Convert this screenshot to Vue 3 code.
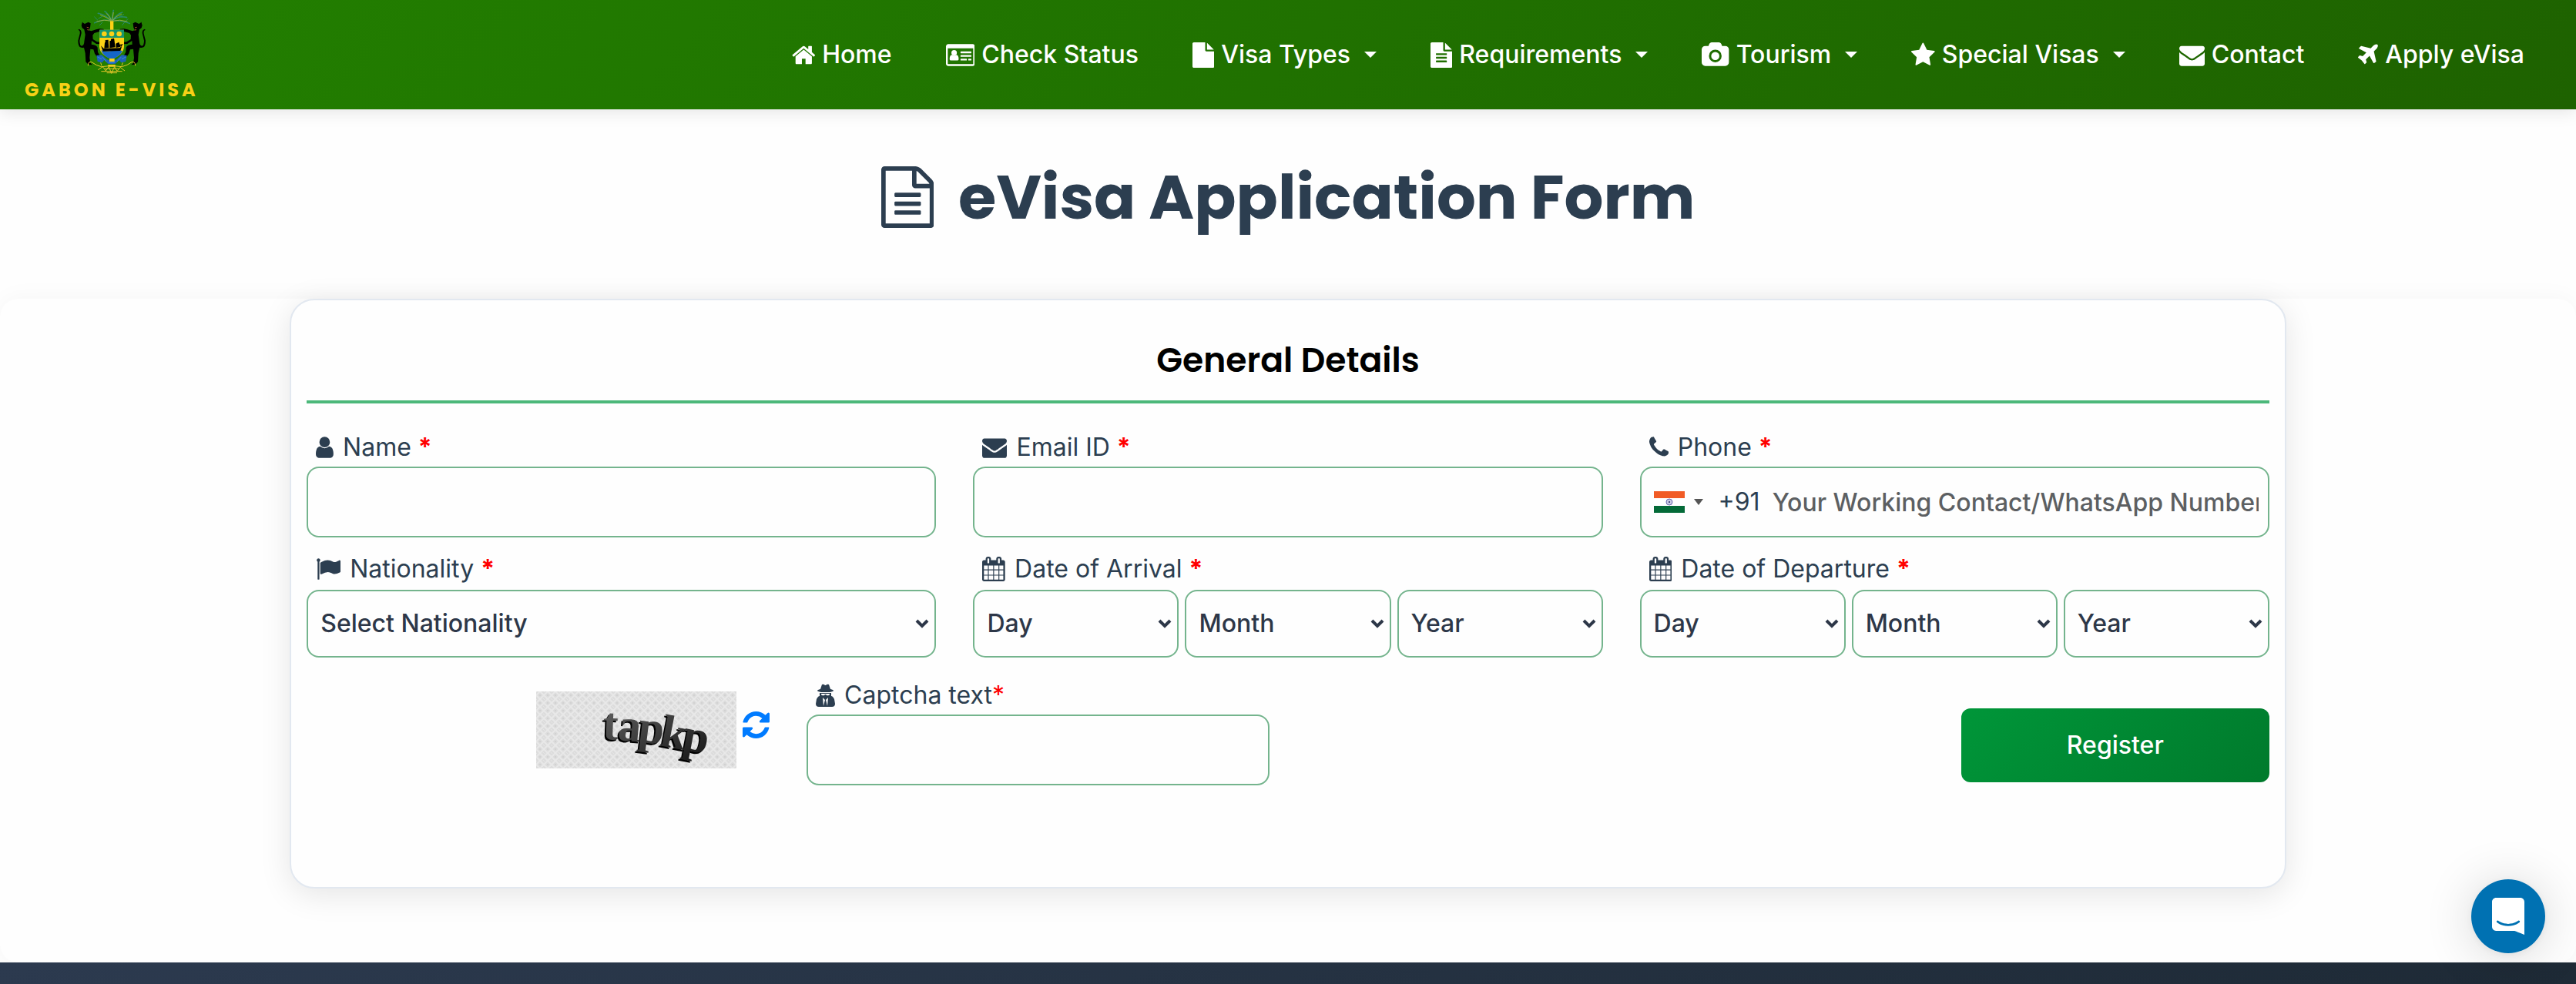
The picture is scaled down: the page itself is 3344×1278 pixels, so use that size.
<script setup>
const icons = {
  home: {
    box: '64 0 1664 1792',
    d: 'M1472 992v480q0 26-19 45t-45 19h-384v-384h-256v384h-384q-26 0-45-19t-19-45v-480q0-1 .5-3t.5-3l575-474 575 474q1 2 1 6zm223-69l-62 74q-8 9-21 11h-3q-13 0-21-7l-692-577-692 577q-12 8-24 7-13-2-21-11l-62-74q-8-10-7-23.5t11-21.5l719-599q32-26 76-26t76 26l244 204v-195q0-14 9-23t23-9h192q14 0 23 9t9 23v408l219 182q10 8 11 21.5t-7 23.5z'
  },
  card: {
    box: '0 0 2048 1792',
    d: 'M160 128h1728q66 0 113 47t47 113v1216q0 66-47 113t-113 47h-1728q-66 0-113-47t-47-113v-1216q0-66 47-113t113-47zM128 416v1088q0 32 32 32h1728q32 0 32-32v-1088zM896 1190q0 90-98 90h-444q-98 0-98-90 0-290 160-310 72 62 160 62t160-62q160 20 160 310zM770 738a194 194 0 1 1-388 0 194 194 0 1 1 388 0zM1056 640h704q32 0 32 32v64q0 32-32 32h-704q-32 0-32-32v-64q0-32 32-32zM1056 896h704q32 0 32 32v64q0 32-32 32h-704q-32 0-32-32v-64q0-32 32-32zM1056 1152h384q32 0 32 32v64q0 32-32 32h-384q-32 0-32-32v-64q0-32 32-32zM1600 1152h160q32 0 32 32v64q0 32-32 32h-160q-32 0-32-32v-64q0-32 32-32z'
  },
  file: {
    box: '128 0 1536 1792',
    d: 'M1152 512v-472q22 14 36 28l408 408q14 14 28 36h-472zm-128 32q0 40 28 68t68 28h544v1056q0 40-28 68t-68 28h-1344q-40 0-68-28t-28-68v-1600q0-40 28-68t68-28h800v544z'
  },
  fileText: {
    box: '128 0 1536 1792',
    d: 'M1596 476q14 14 28 36h-472v-472q22 14 36 28zm-476 164h544v1056q0 40-28 68t-68 28h-1344q-40 0-68-28t-28-68v-1600q0-40 28-68t68-28h800v544q0 40 28 68t68 28zm160 736v-64q0-14-9-23t-23-9h-704q-14 0-23 9t-9 23v64q0 14 9 23t23 9h704q14 0 23-9t9-23zm0-256v-64q0-14-9-23t-23-9h-704q-14 0-23 9t-9 23v64q0 14 9 23t23 9h704q14 0 23-9t9-23zm0-256v-64q0-14-9-23t-23-9h-704q-14 0-23 9t-9 23v64q0 14 9 23t23 9h704q14 0 23-9t9-23z'
  },
  camera: {
    box: '-64 0 1920 1792',
    d: 'M896 672q119 0 203.5 84.5t84.5 203.5-84.5 203.5-203.5 84.5-203.5-84.5-84.5-203.5 84.5-203.5 203.5-84.5zm704-416q106 0 181 75t75 181v896q0 106-75 181t-181 75h-1408q-106 0-181-75t-75-181v-896q0-106 75-181t181-75h224l51-136q19-49 69.5-84.5t103.5-35.5h512q53 0 103.5 35.5t69.5 84.5l51 136h224zm-704 1152q185 0 316.5-131.5t131.5-316.5-131.5-316.5-316.5-131.5-316.5 131.5-131.5 316.5 131.5 316.5 316.5 131.5z'
  },
  star: {
    box: '64 0 1664 1792',
    d: 'M1728 647q0 22-26 48l-363 354 86 500q1 7 1 20 0 21-10.5 35.5t-30.5 14.5q-19 0-40-12l-449-236-449 236q-22 12-40 12-21 0-31.5-14.5t-10.5-35.5q0-6 2-20l86-500-364-354q-25-27-25-48 0-37 56-46l502-73 225-455q19-41 49-41t49 41l225 455 502 73q56 9 56 46z'
  },
  envelope: {
    box: '0 0 1792 1792',
    d: 'M1792 710v794q0 66-47 113t-113 47h-1472q-66 0-113-47t-47-113v-794q44 49 101 87 362 246 497 345 57 42 92.5 65.5t94.5 48 110 24.5h2q51 0 110-24.5t94.5-48 92.5-65.5q170-123 498-345 57-39 100-87zm0-294q0 79-49 151t-122 123q-376 261-468 325-10 7-42.5 31t-54 38.5-52 32.5-57.5 27-50 9h-2q-23 0-50-9t-57.5-27-52-32.5-54-38.5-42.5-31q-91-64-262-182.5t-205-142.5q-62-42-117-115.5t-55-136.5q0-78 41.5-130t118.5-52h1472q65 0 112.5 47t47.5 113z'
  },
  plane: {
    box: '192 0 1408 1792',
    d: 'M1568 160q44 52 12 148t-108 172l-161 161 160 696q5 19-12 33l-128 96q-7 6-19 6-4 0-7-1-15-3-21-16l-279-508-259 259 53 194q5 17-8 31l-96 96q-9 9-23 9h-2q-15-2-24-13l-189-252-252-189q-11-7-13-23-1-13 9-25l96-97q9-9 23-9 6 0 8 1l194 53 259-259-508-279q-14-8-17-24-2-16 9-27l128-128q14-13 30-8l665 159 160-160q76-76 172-108t148 12z'
  },
  user: {
    box: '256 0 1280 1792',
    d: 'M1536 1399q0 109-62.5 187t-150.5 78h-854q-88 0-150.5-78t-62.5-187q0-85 8.5-160.5t31.5-152 58.5-131 94-89 134.5-34.5q131 128 313 128t313-128q76 0 134.5 34.5t94 89 58.5 131 31.5 152 8.5 160.5zm-256-887q0 159-112.5 271.5t-271.5 112.5-271.5-112.5-112.5-271.5 112.5-271.5 271.5-112.5 271.5 112.5 112.5 271.5z'
  },
  phone: {
    box: '192 0 1408 1792',
    d: 'M1600 1240q0 27-10 70.5t-21 68.5q-21 50-122 106-94 51-186 51-27 0-53-3.5t-57.5-12.5-47-14.5-55.5-20.5-49-18q-98-35-175-83-127-79-264-216t-216-264q-48-77-83-175-3-9-18-49t-20.5-55.5-14.5-47-12.5-57.5-3.5-53q0-92 51-186 56-101 106-122 25-11 68.5-21t70.5-10q14 0 21 3 18 6 53 76 11 19 30 54t35 63.5 31 53.5q3 4 17.5 25t21.5 35.5 7 28.5q0 20-28.5 50t-62 55-62 53-28.5 46q0 9 5 22.5t8.5 20.5 14 24 11.5 19q76 137 174 235t235 174q2 1 19 11.5t24 14 20.5 8.5 22.5 5q18 0 46-28.5t53-62 55-62 50-28.5q14 0 28.5 7t35.5 21.5 25 17.5q25 15 53.5 31t63.5 35 54 30q70 35 76 53 3 7 3 21z'
  },
  flag: {
    box: '0 0 1792 1792',
    d: 'M320 256q0 72-64 110v1266q0 13-9.5 22.5t-22.5 9.5h-64q-13 0-22.5-9.5t-9.5-22.5v-1266q-64-38-64-110 0-53 37.5-90.5t90.5-37.5 90.5 37.5 37.5 90.5zm1472 64v763q0 25-12.5 38.5t-39.5 27.5q-215 116-369 116-61 0-123.5-22t-108.5-48-115.5-48-142.5-22q-192 0-464 146-17 9-33 9-26 0-45-19t-19-45v-742q0-32 31-55 21-14 79-43 236-120 421-120 107 0 200 29t219 88q38 19 88 19 54 0 117.5-21t110-47 88-47 54.5-21q26 0 45 19t19 45z'
  },
  calendar: {
    box: '64 0 1664 1792',
    d: 'M192 1664h288v-288h-288v288zm352 0h320v-288h-320v288zm-352-352h288v-320h-288v320zm352 0h320v-320h-320v320zm-352-384h288v-288h-288v288zm736 736h320v-288h-320v288zm-384-736h320v-288h-320v288zm768 736h288v-288h-288v288zm-384-352h320v-320h-320v320zm-352-864v-288q0-13-9.5-22.5t-22.5-9.5h-64q-13 0-22.5 9.5t-9.5 22.5v288q0 13 9.5 22.5t22.5 9.5h64q13 0 22.5-9.5t9.5-22.5zm736 864h288v-320h-288v320zm-384-384h320v-288h-320v288zm384 0h288v-288h-288v288zm32-480v-288q0-13-9.5-22.5t-22.5-9.5h-64q-13 0-22.5 9.5t-9.5 22.5v288q0 13 9.5 22.5t22.5 9.5h64q13 0 22.5-9.5t9.5-22.5zm384-64v1280q0 52-38 90t-90 38h-1408q-52 0-90-38t-38-90v-1280q0-52 38-90t90-38h128v-96q0-66 47-113t113-47h64q66 0 113 47t47 113v96h384v-96q0-66 47-113t113-47h64q66 0 113 47t47 113v96h128q52 0 90 38t38 90z'
  }
}

const nav = [
  { label: 'Home', icon: icons.home },
  { label: 'Check Status', icon: icons.card },
  { label: 'Visa Types', icon: icons.file, menu: true },
  { label: 'Requirements', icon: icons.fileText, menu: true },
  { label: 'Tourism', icon: icons.camera, menu: true },
  { label: 'Special Visas', icon: icons.star, menu: true },
  { label: 'Contact', icon: icons.envelope },
  { label: 'Apply eVisa', icon: icons.plane }
]

const dates = [
  { id: 'arrival', label: 'Date of Arrival' },
  { id: 'departure', label: 'Date of Departure' }
]
const dateParts = ['Day', 'Month', 'Year']
</script>

<template>
  <div class="page">
    <header class="topbar">
      <a class="brand" href="#" aria-label="Gabon e-Visa">
        <svg class="crest" viewBox="304 42 270 255" aria-hidden="true">
          <g fill="none" stroke="#2a8a6a" stroke-width="5" stroke-linecap="round">
            <path d="M436 88Q410 78 370 96M436 86Q412 62 386 58M438 84Q428 62 412 50M440 84Q442 62 446 46M442 86Q458 62 480 54M442 86Q466 66 498 74M444 88Q474 82 510 98" stroke-dasharray="3 4" />
            <path d="M384 84l-12-12M402 70l-14 8M470 70l16-8M490 92l12-12M392 104l10-10M480 104l8-10" stroke-width="3" />
          </g>
          <path d="M438 88Q410 80 380 90M438 87Q414 70 394 64M438 86Q430 68 418 58M441 86L446 54M442 87Q456 68 478 60M442 88Q470 80 500 90" fill="none" stroke="#c9c22c" stroke-width="2" />
          <path d="M433 88h13v36h-13z" fill="#fcd116" />
          <g id="panther">
            <path d="M326 94l8 5 14-7 9 5-2 17-5 10 9 3q22-7 32-9l16 1 4 6-12 2-28 8-6 8 1 16 16 10 15 1-2 8-16-1-18-12 -1 14q20 1 24 12l1 18 8 14 2 8-12-2-10-14-5-16-12-2-3 34 3 20 8 8-16-2-10-10-2-34-5-22q-8 2-15-1-8-6-8-26l7-27q2-12-6-14l2-4q11 3 10 16l-7 29q0 18 8 21 10-1 10-16l4-28-4-20-8-6-3-10 4-14z" fill="#000" />
            <path d="M342 112l8 2M344 122l7 1" stroke="#b0532c" stroke-width="3" />
          </g>
          <use href="#panther" transform="translate(879 0) scale(-1 1)" />
          <path d="M392 122h95v66q-2 32-48 48-46-16-48-48z" fill="#fcd116" />
          <path d="M392 122h95v31h-95z" fill="#16966c" />
          <g fill="#fcd116"><circle cx="410" cy="138" r="10" /><circle cx="439" cy="138" r="10" /><circle cx="468" cy="138" r="10" /></g>
          <path d="M398 202q20 6 41 2t42 0q-9 22-42 34-34-12-41-36z" fill="#1566c8" />
          <path d="M397 184l11 11 62-2 9-8-6 19-68 2zM412 172l14-4 2 24-18 2zM414 162l12-1v8l-12 2zM431 166l18-6 4 30-22 3zM436 158l12-3 1 8-13 4zM455 176l12-6 7 18-18 4zM470 180l14-2-8 9z" fill="#000" />
          <path d="M380 222l20-2 20 18 19 4 19-4 20-18 20 2-4 24-18 4-8-10-14 14-15 2-15-2-14-14-8 10-18-4z" fill="#1c63b8" />
          <path d="M384 228l16 8M402 228l16 18M426 250h26M460 246l16-18M494 228l-16 8" stroke="#53a2df" stroke-width="2" />
          <path d="M430 234h20v12h-20zM425 258h28v8h-28z" fill="#fcd116" />
          <path d="M347 262q0-18 14-14 18 14 38 18l40-4 40 4q22-6 38-18 14-4 14 14M386 278l18-12 12 16 12-16 10 26 12-26 10 18 12-16 18 14M400 262l-4-12M478 262l4-12M398 284h82M410 274h60M420 290h40" fill="none" stroke="#e5c52a" stroke-width="3" />
        </svg>
        <span class="brand-name">GABON E-VISA</span>
      </a>
      <nav class="nav" aria-label="Main">
        <a v-for="item in nav" :key="item.label" href="#" class="nav-link">
          <svg class="nav-icon" :viewBox="item.icon.box" aria-hidden="true"><path :d="item.icon.d" fill-rule="evenodd" /></svg>
          <span>{{ item.label }}</span>
          <span v-if="item.menu" class="nav-caret"></span>
        </a>
      </nav>
    </header>

    <main>
      <div class="hero">
        <h1>
          <svg class="hero-icon" viewBox="128 0 1536 1792" aria-hidden="true"><path d="M1596 380q28 28 48 76t20 88v1152q0 40-28 68t-68 28h-1344q-40 0-68-28t-28-68v-1600q0-40 28-68t68-28h896q40 0 88 20t76 48zm-444-244v376h376q-10-29-22-41l-313-313q-12-12-41-22zm384 1528v-1024h-416q-40 0-68-28t-28-68v-416h-768v1536h1280zm-1024-864q0-14 9-23t23-9h704q14 0 23 9t9 23v64q0 14-9 23t-23 9h-704q-14 0-23-9t-9-23v-64zm736 224q14 0 23 9t9 23v64q0 14-9 23t-23 9h-704q-14 0-23-9t-9-23v-64q0-14 9-23t23-9h704zm0 256q14 0 23 9t9 23v64q0 14-9 23t-23 9h-704q-14 0-23-9t-9-23v-64q0-14 9-23t23-9h704z" /></svg>
          <span>eVisa Application Form</span>
        </h1>
      </div>

      <section class="sheet">
        <form class="card" @submit.prevent>
          <h2>General Details</h2>

          <div class="row row-first">
            <div class="field">
              <label for="name">
                <svg class="label-icon" :viewBox="icons.user.box" aria-hidden="true"><path :d="icons.user.d" /></svg>
                <span>Name <b>*</b></span>
              </label>
              <input id="name" type="text" class="control">
            </div>
            <div class="field">
              <label for="email">
                <svg class="label-icon" :viewBox="icons.envelope.box" aria-hidden="true"><path :d="icons.envelope.d" /></svg>
                <span>Email ID <b>*</b></span>
              </label>
              <input id="email" type="email" class="control">
            </div>
            <div class="field">
              <label for="phone">
                <svg class="label-icon" :viewBox="icons.phone.box" aria-hidden="true"><path :d="icons.phone.d" /></svg>
                <span>Phone <b>*</b></span>
              </label>
              <div class="control phone">
                <button type="button" class="country" aria-label="Country: India">
                  <svg class="india" viewBox="0 0 40 28" aria-hidden="true">
                    <path d="M0 0h40v28H0z" fill="#fff" />
                    <path d="M0 0h40v9H0z" fill="#f15b25" />
                    <path d="M0 19h40v9H0z" fill="#046a38" />
                    <circle cx="20" cy="14" r="4" fill="#c9c9e4" stroke="#6a6ab0" />
                    <circle cx="20" cy="14" r="1" fill="#222266" />
                  </svg>
                  <span class="country-caret"></span>
                </button>
                <span class="dial">+91</span>
                <input id="phone" type="tel" placeholder="Your Working Contact/WhatsApp Number">
              </div>
            </div>
          </div>

          <div class="row row-second">
            <div class="field">
              <label for="nationality">
                <svg class="label-icon" :viewBox="icons.flag.box" aria-hidden="true"><path :d="icons.flag.d" /></svg>
                <span>Nationality <b>*</b></span>
              </label>
              <div class="select">
                <select id="nationality"><option>Select Nationality</option></select>
                <svg class="chevron" viewBox="0 0 18 12" aria-hidden="true"><path d="M2 2l7 7 7-7" /></svg>
              </div>
            </div>
            <div v-for="date in dates" :key="date.id" class="field">
              <label :for="date.id + '-Day'">
                <svg class="label-icon" :viewBox="icons.calendar.box" aria-hidden="true"><path :d="icons.calendar.d" /></svg>
                <span>{{ date.label }} <b>*</b></span>
              </label>
              <div class="date">
                <div v-for="part in dateParts" :key="part" class="select">
                  <select :id="date.id + '-' + part" :aria-label="date.label + ' ' + part"><option>{{ part }}</option></select>
                  <svg class="chevron" viewBox="0 0 18 12" aria-hidden="true"><path d="M2 2l7 7 7-7" /></svg>
                </div>
              </div>
            </div>
          </div>

          <div class="row-last">
            <div class="captcha">
              <svg class="captcha-image" viewBox="0 0 260 100" role="img" aria-label="Captcha">
                <defs>
                  <pattern id="weave" width="10" height="10" patternUnits="userSpaceOnUse">
                    <path d="M0 0h10v10H0z" fill="#dcdcdc" />
                    <path d="M0 5l5-5 5 5-5 5zM-1 1l2-2M9 11l2-2" fill="none" stroke="#e8e8e8" stroke-width="2" />
                    <circle cx="5" cy="5" r="1" fill="#cfcfcf" />
                  </pattern>
                  <linearGradient id="ink" x1="0" y1="0" x2="1" y2="1">
                    <stop offset="0" stop-color="#666" /><stop offset=".6" stop-color="#333" /><stop offset="1" stop-color="#111" />
                  </linearGradient>
                </defs>
                <path d="M0 0h260v100H0z" fill="url(#weave)" />
                <g class="captcha-shadow"><text x="84 103 129 157 186" y="64 65 67 72 77" rotate="2 5 7 11 11">tapkp</text></g>
                <text x="86 105 131 159 188" y="62 63 65 70 75" rotate="2 5 7 11 11" fill="url(#ink)" class="captcha-text" aria-hidden="true">tapkp</text>
              </svg>
              <button type="button" class="refresh" aria-label="Refresh captcha">
                <svg viewBox="128 128 1536 1536" aria-hidden="true"><path d="M1639 1056q0 5-1 7-64 268-268 434.500t-478 166.500q-146 0-282.500-55t-243.500-157l-129 129q-19 19-45 19t-45-19-19-45v-448q0-26 19-45t45-19h448q26 0 45 19t19 45-19 45l-137 137q71 66 161 102t187 36q134 0 250-65t186-179q11-17 53-117 8-23 30-23h192q13 0 22.500 9.500t9.500 22.500zm25-800v448q0 26-19 45t-45 19h-448q-26 0-45-19t-19-45 19-45l138-138q-148-137-349-137-134 0-250 65t-186 179q-11 17-53 117-8 23-30 23h-199q-13 0-22.500-9.500t-9.500-22.500v-7q65-268 270-434.500t480-166.500q146 0 284 55.500t245 156.500l130-129q19-19 45-19t45 19 19 45z" /></svg>
              </button>
            </div>
            <div class="field">
              <label for="captcha">
                <svg class="label-icon" viewBox="0 0 25 32" aria-hidden="true">
                  <path d="M8 2q2-1 4 1h1q2-2 4-1l2 6q4 1 4 2t-5 2H7q-5-1-5-2t4-2zM5 13h15v4q2 0 4 4l1 6q0 4-4 4H4q-4 0-4-4l1-6q2-4 4-4zM7 14v1q1 2 4 1l1-1h1l1 1q3 1 4-1v-1zM9 19l3 3-2 8zM16 19l-3 3 2 8z" fill-rule="evenodd" />
                </svg>
                <span>Captcha text<i>*</i></span>
              </label>
              <input id="captcha" type="text" class="control">
            </div>
            <button type="submit" class="register">Register</button>
          </div>
        </form>
      </section>
    </main>

    <footer class="footer"></footer>

    <button type="button" class="chat" aria-label="Open chat">
      <svg viewBox="0 0 28 32" aria-hidden="true"><path d="M28 32s-4.714-1.855-8.527-3.340H3.437C1.540 28.660 0 27.026 0 25.013V3.644C0 1.633 1.540 0 3.437 0h21.125c1.898 0 3.437 1.632 3.437 3.645v18.404H28V32zm-4.139-11.982a.88.88 0 00-1.292-.105c-.03.026-3.015 2.681-8.570 2.681-5.486 0-8.517-2.636-8.571-2.684a.88.88 0 00-1.290.107 1.010 1.010 0 00-.219.708.992.992 0 00.318.664c.142.128 3.537 3.150 9.762 3.150 6.226 0 9.621-3.022 9.763-3.150a.992.992 0 00.317-.664 1.010 1.010 0 00-.218-.707z" /></svg>
    </button>
  </div>
</template>

<style>
body {
  background: #fefefe;
}
</style>

<style scoped>
.page {
  --ink: #2c3e50;
  --line: #74b48d;
  display: flex;
  flex-direction: column;
  min-height: 100vh;
  overflow: hidden;
  color: var(--ink);
  font-family: Inter, "Liberation Sans", sans-serif;
  font-size: 32px;
  line-height: 40px;
}

.page *,
.page *::before,
.page *::after {
  box-sizing: border-box;
}

button,
input,
select {
  margin: 0;
  font: inherit;
}

.topbar {
  position: relative;
  z-index: 1;
  display: flex;
  align-items: center;
  justify-content: space-between;
  min-height: 142px;
  padding: 0 32px;
  background: linear-gradient(135deg, #228000, #1e6200);
  box-shadow: 0 4px 20px rgba(0, 0, 0, 0.1);
}

.brand {
  display: flex;
  flex-direction: column;
  align-items: center;
  gap: 6px;
  color: #f7d117;
  text-decoration: none;
}

.crest {
  width: 90px;
  height: 85px;
}

.brand-name {
  font-family: Poppins, Inter, sans-serif;
  font-size: 24px;
  font-weight: 700;
  letter-spacing: 4px;
  line-height: 28px;
}

.nav {
  display: flex;
}

.nav-link {
  display: flex;
  align-items: center;
  gap: 9px;
  padding: 0 35px;
  color: #fff;
  font-weight: 500;
  text-decoration: none;
  white-space: nowrap;
}

.nav-icon {
  height: 33px;
  fill: #fff;
}

.nav-caret {
  margin-left: 9px;
  border: 8px solid transparent;
  border-top-color: #fff;
  border-bottom: 0;
}

.hero {
  padding: 66px 32px 84px;
}

h1 {
  display: flex;
  align-items: center;
  justify-content: center;
  gap: 32px;
  margin: 0;
  font-family: Poppins, Inter, sans-serif;
  font-size: 80px;
  font-weight: 700;
  line-height: 96px;
}

.hero-icon {
  height: 80px;
  fill: var(--ink);
}

.sheet {
  padding-bottom: 96px;
  border-radius: 24px;
  background: #fefefe;
  box-shadow: 0 0 32px rgba(0, 0, 0, 0.04);
}

.card {
  width: 77.5%;
  margin: 0 auto;
  padding: 50px 20px 132px;
  border: 2px solid #e2e8f0;
  border-radius: 32px;
  background: #fefefe;
  box-shadow: 0 8px 40px rgba(0, 0, 0, 0.1);
}

h2 {
  margin: 0;
  padding-bottom: 24px;
  border-bottom: 4px solid #4cb87a;
  color: #000;
  font-family: Poppins, Inter, sans-serif;
  font-size: 44px;
  font-weight: 600;
  line-height: 56px;
  text-align: center;
}

.row {
  display: grid;
  grid-template-columns: repeat(3, minmax(0, 1fr));
  column-gap: 48px;
}

.row-first {
  margin-top: 37px;
}

.row-second {
  margin-top: 21px;
}

.field {
  display: flex;
  flex-direction: column;
  gap: 5px;
}

.row-second .field {
  gap: 7px;
}

label {
  display: flex;
  align-items: center;
  gap: 12px;
  padding-left: 12px;
}

label b,
label i {
  color: #f00;
  font-style: normal;
}

.label-icon {
  height: 32px;
  fill: var(--ink);
}

.control {
  width: 100%;
  height: 92px;
  padding: 0 12px 0 16px;
  border: 2px solid var(--line);
  border-radius: 16px;
  outline: 0;
  background: #fefefe;
}

.phone {
  display: flex;
  align-items: center;
}

.phone input {
  flex: 1;
  min-width: 0;
  height: 100%;
  margin-left: 16px;
  padding: 0;
  border: 0;
  outline: 0;
  background: transparent;
  color: #2d3748;
  font-weight: 500;
}

.phone input::placeholder {
  color: #5c5f62;
  opacity: 1;
}

.country {
  display: flex;
  align-items: center;
  gap: 12px;
  padding: 0;
  border: 0;
  background: none;
}

.india {
  width: 40px;
  height: 28px;
}

.country-caret {
  border: 6px solid transparent;
  border-top: 8px solid #555;
  border-bottom: 0;
}

.dial {
  margin-left: 20px;
}

.date {
  display: grid;
  grid-template-columns: repeat(3, minmax(0, 1fr));
  gap: 8px;
}

.select {
  position: relative;
}

select {
  display: block;
  width: 100%;
  height: 88px;
  padding: 0 40px 0 16px;
  border: 2px solid var(--line);
  border-radius: 16px;
  appearance: none;
  background: #fefefe;
  color: #2d3748;
  font-weight: 500;
}

.chevron {
  position: absolute;
  top: 38px;
  right: 9px;
  width: 18px;
  height: 12px;
  fill: none;
  stroke: #2d3748;
  stroke-width: 4;
  pointer-events: none;
}

.row-last {
  display: grid;
  grid-template-columns: repeat(4, minmax(0, 1fr));
  column-gap: 48px;
  margin-top: 29px;
}

.captcha {
  display: flex;
  align-items: flex-start;
  justify-content: flex-end;
  gap: 8px;
  padding-top: 15px;
}

.captcha-image {
  width: 260px;
  height: 100px;
}

.captcha-image text {
  font-family: "Liberation Serif", serif;
  font-size: 60px;
  font-weight: 700;
}

.captcha-shadow {
  fill: #000;
}

.refresh {
  margin-top: 26px;
  padding: 0;
  border: 0;
  background: none;
}

.refresh svg {
  display: block;
  width: 35px;
  height: 35px;
  fill: #007bff;
}

.register {
  grid-column: 4;
  align-self: end;
  justify-self: end;
  width: 400px;
  height: 96px;
  margin-bottom: 4px;
  border: 0;
  border-radius: 12px;
  background: linear-gradient(135deg, #009639, #007a2c);
  color: #fff;
  font-weight: 500;
}

.footer {
  flex: 1;
  min-height: 28px;
  background: linear-gradient(135deg, #2c3a4f, #1e2a36);
}

.chat {
  position: fixed;
  right: 40px;
  bottom: 40px;
  z-index: 2;
  display: grid;
  place-items: center;
  width: 96px;
  height: 96px;
  padding: 0;
  border: 0;
  border-radius: 50%;
  background: #0071b2;
  box-shadow: 0 2px 12px rgba(0, 0, 0, 0.06), 0 4px 64px rgba(0, 0, 0, 0.16);
}

.chat svg {
  width: 42px;
  height: 48px;
  fill: #fff;
}
</style>
